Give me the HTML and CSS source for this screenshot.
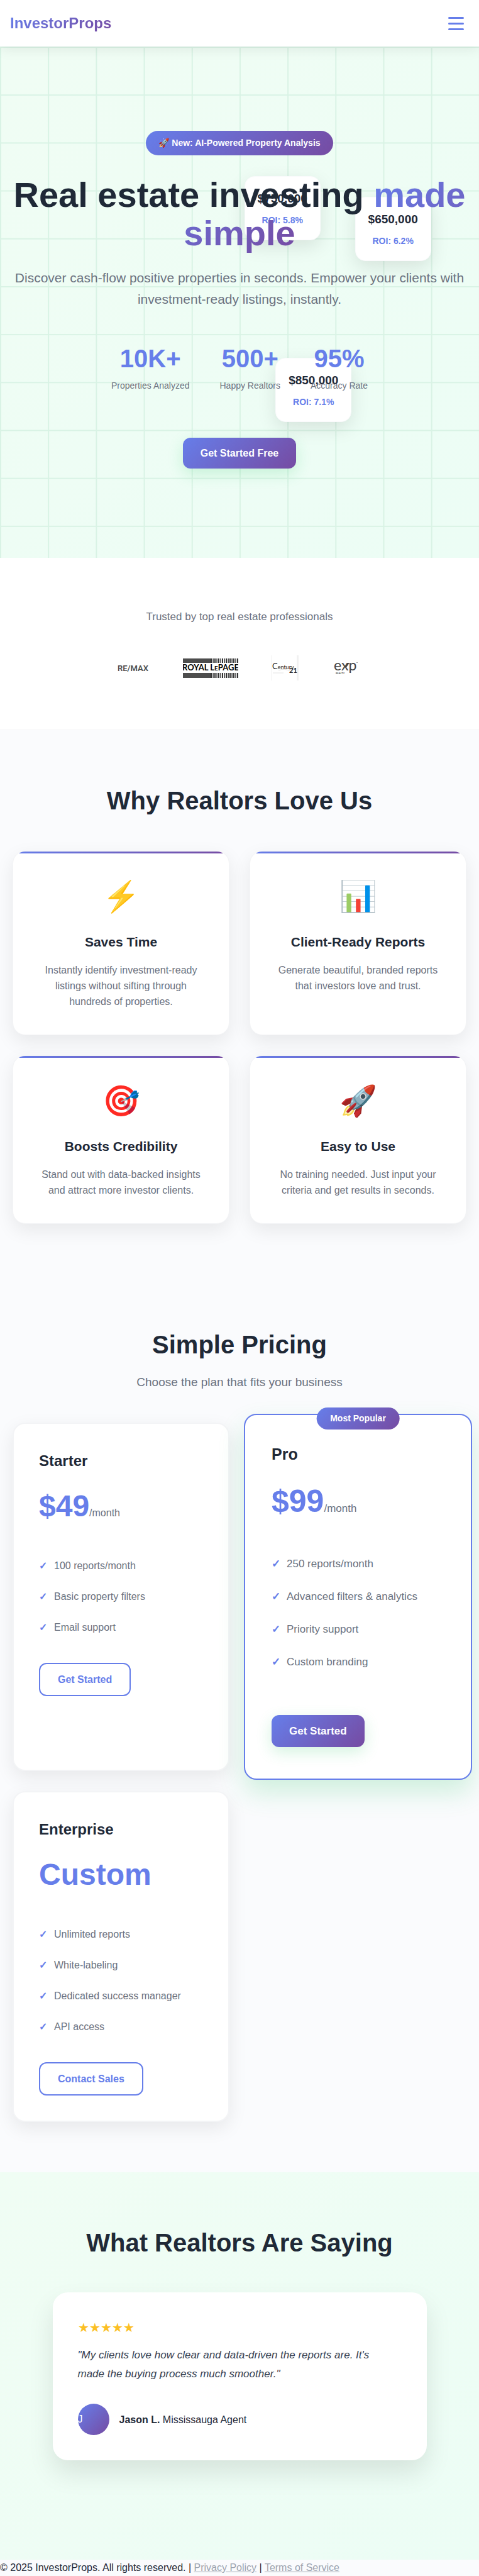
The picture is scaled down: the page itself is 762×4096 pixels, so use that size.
FILE: index.html
```html
<!DOCTYPE html>
<html lang="en">
<head>
<meta charset="utf-8">
<meta name="viewport" content="width=device-width, initial-scale=1">
<title>InvestorProps</title>
<link rel="stylesheet" href="styles.css">
</head>
<body>
<header class="nav">
  <a class="nav-logo gradient-text" href="#">InvestorProps</a>
  <button class="nav-toggle" type="button" aria-label="Open menu"><span></span><span></span><span></span></button>
</header>

<main>
<section class="hero">
  <div class="hero-cards" aria-hidden="true">
    <div class="float-card float-a"><p class="float-price">$750,000</p><p class="float-roi">ROI: 5.8%</p></div>
    <div class="float-card float-b"><p class="float-price">$650,000</p><p class="float-roi">ROI: 6.2%</p></div>
    <div class="float-card float-c"><p class="float-price">$850,000</p><p class="float-roi">ROI: 7.1%</p></div>
  </div>
  <div class="hero-content">
    <p class="badge">🚀 New: AI-Powered Property Analysis</p>
    <h1 class="hero-title">Real estate investing <span class="gradient-text">made simple</span></h1>
    <p class="hero-text">Discover cash-flow positive properties in seconds. Empower your clients with investment-ready listings, instantly.</p>
    <div class="stats">
      <div class="stat"><span class="stat-number">10K+</span><span class="stat-label">Properties Analyzed</span></div>
      <div class="stat"><span class="stat-number">500+</span><span class="stat-label">Happy Realtors</span></div>
      <div class="stat"><span class="stat-number">95%</span><span class="stat-label">Accuracy Rate</span></div>
    </div>
    <a class="btn btn-primary" href="#">Get Started Free</a>
  </div>
</section>

<section class="trust">
  <p class="trust-text">Trusted by top real estate professionals</p>
  <div class="logos">
    <svg width="52" height="40" viewBox="0 0 52 40" role="img" aria-label="RE/MAX">
      <text class="logo-remax" x="0" y="25">RE/MAX</text>
    </svg>
    <svg width="88" height="40" viewBox="0 0 88 40" role="img" aria-label="Royal LePage">
      <defs>
        <pattern id="bars" width="6" height="8" patternUnits="userSpaceOnUse">
          <rect width="1" height="8" fill="#555"/><rect x="2" width="2" height="8" fill="#333"/><rect x="5" width="1" height="8" fill="#777"/>
        </pattern>
      </defs>
      <rect y="5" width="44" height="7" fill="#4d4d4d"/><rect x="44" y="5" width="44" height="7" fill="url(#bars)"/>
      <text class="logo-royal" x="44" y="24" text-anchor="middle">ROYAL L<tspan class="logo-small">E</tspan>PAGE</text>
      <rect y="28" width="44" height="8" fill="#4d4d4d"/><rect x="44" y="28" width="44" height="8" fill="url(#bars)"/>
    </svg>
    <svg width="44" height="40" viewBox="0 0 44 40" role="img" aria-label="Century 21">
      <rect width="1" height="40" fill="#f3f3f3"/><rect x="41" width="3" height="40" fill="#f1f1f1"/>
      <path d="M3 28H20M12 24Q22 20 30 25" fill="none" stroke="#e3e3e3"/>
      <text class="logo-century" x="2" y="22"><tspan class="logo-cap">C</tspan>entury</text>
      <text class="logo-21" x="29" y="28">21</text>
    </svg>
    <svg width="49" height="40" viewBox="0 0 49 40" role="img" aria-label="eXp Realty">
      <text class="logo-exp" x="4" y="24">exp</text>
      <path d="M21 19 26 12H29L24 19Z" fill="#444"/>
      <text class="logo-realty" x="7" y="30">REALTY</text>
      <rect x="40" y="11" width="2" height="1" fill="#999"/>
    </svg>
  </div>
</section>

<section class="features">
  <h2 class="section-title">Why Realtors Love Us</h2>
  <div class="feature-grid">
    <article class="feature"><div class="feature-icon">⚡</div><h3>Saves Time</h3><p>Instantly identify investment-ready listings without sifting through hundreds of properties.</p></article>
    <article class="feature"><div class="feature-icon">📊</div><h3>Client-Ready Reports</h3><p>Generate beautiful, branded reports that investors love and trust.</p></article>
    <article class="feature"><div class="feature-icon">🎯</div><h3>Boosts Credibility</h3><p>Stand out with data-backed insights and attract more investor clients.</p></article>
    <article class="feature"><div class="feature-icon">🚀</div><h3>Easy to Use</h3><p>No training needed. Just input your criteria and get results in seconds.</p></article>
  </div>
</section>

<section class="pricing">
  <h2 class="section-title">Simple Pricing</h2>
  <p class="section-text">Choose the plan that fits your business</p>
  <div class="plan-grid">
    <article class="plan">
      <h3>Starter</h3>
      <p class="price">$49<span>/month</span></p>
      <ul><li>100 reports/month</li><li>Basic property filters</li><li>Email support</li></ul>
      <a class="btn btn-outline" href="#">Get Started</a>
    </article>
    <article class="plan plan-popular">
      <p class="plan-tag">Most Popular</p>
      <h3>Pro</h3>
      <p class="price">$99<span>/month</span></p>
      <ul><li>250 reports/month</li><li>Advanced filters &amp; analytics</li><li>Priority support</li><li>Custom branding</li></ul>
      <a class="btn btn-primary" href="#">Get Started</a>
    </article>
    <article class="plan">
      <h3>Enterprise</h3>
      <p class="price">Custom</p>
      <ul><li>Unlimited reports</li><li>White-labeling</li><li>Dedicated success manager</li><li>API access</li></ul>
      <a class="btn btn-outline" href="#">Contact Sales</a>
    </article>
  </div>
</section>

<section class="testimonials">
  <h2 class="section-title">What Realtors Are Saying</h2>
  <figure class="testimonial">
    <div class="stars" role="img" aria-label="5 out of 5 stars">★★★★★</div>
    <blockquote>"My clients love how clear and data-driven the reports are. It's made the buying process much smoother."</blockquote>
    <figcaption><span class="avatar">J</span><span><strong>Jason L.</strong> Mississauga Agent</span></figcaption>
  </figure>
</section>
</main>

<footer class="footer">© 2025 InvestorProps. All rights reserved. | <a href="#">Privacy Policy</a> | <a href="#">Terms of Service</a></footer>
</body>
</html>
```
FILE: styles.css
```css
:root {
  --ink: #1f2937;
  --muted: #6b7280;
  --accent: #667eea;
  --gradient: linear-gradient(135deg, #667eea 0%, #764ba2 100%);
  --mint: linear-gradient(135deg, #f0fdf4 0%, #ecfdf5 100%);
  --shadow: 0 10px 30px rgba(0, 0, 0, 0.08);
}

* { box-sizing: border-box; margin: 0; padding: 0; }

body {
  font: 16px/25px "Liberation Sans", Arial, sans-serif;
  color: var(--ink);
  background: #fafbfd;
}

.gradient-text {
  background: var(--gradient);
  -webkit-background-clip: text;
  background-clip: text;
  color: transparent;
}

/* Navigation */
.nav {
  position: relative;
  z-index: 2;
  display: flex;
  align-items: center;
  justify-content: space-between;
  height: 74px;
  padding: 0 16px;
  background: #fff;
  box-shadow: 0 4px 20px rgba(0, 0, 0, 0.08);
}
.nav-logo { font-size: 24px; line-height: 38px; font-weight: 700; text-decoration: none; }
.nav-toggle {
  display: flex;
  flex-direction: column;
  gap: 6px;
  padding: 8px;
  border: 0;
  background: none;
}
.nav-toggle span { width: 25px; height: 3px; border-radius: 2px; background: var(--accent); }

/* Hero */
.hero {
  position: relative;
  padding: 134px 16px 142px;
  text-align: center;
  background:
    linear-gradient(90deg, #d9f3e5 2px, transparent 2px) 0 0 / 10vw 10vw,
    linear-gradient(#d9f3e5 2px, transparent 2px) 0 0 / 10vw 10vw,
    var(--mint);
}
.hero-content { position: relative; display: flex; flex-direction: column; align-items: center; }
.badge {
  padding: 8px 20px;
  border-radius: 50px;
  background: var(--gradient);
  color: #fff;
  font-size: 14px;
  line-height: 23px;
  font-weight: 600;
  margin-bottom: 32px;
}
.hero-title { font-size: 56px; line-height: 61px; font-weight: 800; margin-bottom: 24px; }
.hero-text { font-size: 21px; line-height: 34px; color: var(--muted); margin-bottom: 45px; }
.stats { display: flex; gap: 48px; margin-bottom: 71px; }
.stat { display: flex; flex-direction: column; align-items: center; }
.stat-number { font-size: 40px; line-height: 64px; font-weight: 700; color: var(--accent); }
.stat-label { font-size: 14px; line-height: 23px; color: var(--muted); }

.float-card {
  position: absolute;
  padding: 20px;
  border: 1px solid #f9fafb;
  border-radius: 16px;
  background: #fff;
  box-shadow: 0 10px 30px rgba(0, 0, 0, 0.1);
}
.float-a { top: 206px; left: 51%; }
.float-b { top: 239px; right: 10%; }
.float-c { top: 495px; left: 57.5%; }
.float-price { font-size: 19px; line-height: 30px; font-weight: 700; margin-bottom: 8px; }
.float-roi { font-size: 14px; line-height: 22px; font-weight: 600; color: var(--accent); }

/* Buttons */
.btn {
  display: inline-block;
  padding: 12px 28px;
  border-radius: 12px;
  font-size: 16px;
  line-height: 25px;
  font-weight: 600;
  text-decoration: none;
}
.btn-primary { background: var(--gradient); color: #fff; box-shadow: 0 8px 24px rgba(34, 197, 94, 0.2); }
.btn-outline { border: 2px solid var(--accent); color: var(--accent); }

/* Trusted by */
.trust { padding: 80px 16px 78px; text-align: center; background: #fff; border-bottom: 1px solid #f3f4f6; }
.trust-text { font-size: 17px; line-height: 28px; color: var(--muted); margin-bottom: 47px; }
.logos { display: flex; justify-content: center; gap: 52px; }
.logo-remax { font: 600 13px Roboto, sans-serif; fill: #4d4d4d; }
.logo-royal { font: 700 13px Lato, sans-serif; fill: #000; }
.logo-small { font-size: 10px; }
.logo-century { font: 400 9px Lato, sans-serif; fill: #222; }
.logo-cap { font-size: 13px; }
.logo-21 { font: 700 11px Lato, sans-serif; fill: #222; }
.logo-exp { font: 400 23px Lato, sans-serif; fill: #444; }
.logo-realty { font: 600 4px Lato, sans-serif; fill: #444; }

/* Sections */
.section-title { font-size: 40px; line-height: 64px; font-weight: 700; text-align: center; }

.features { padding: 80px 20px; }
.features .section-title { margin-bottom: 48px; }
.feature-grid { display: grid; grid-template-columns: 1fr 1fr; gap: 32px; }
.feature {
  position: relative;
  overflow: hidden;
  padding: 40px;
  text-align: center;
  border: 1px solid #f3f4f6;
  border-radius: 20px;
  background: #fff;
  box-shadow: var(--shadow);
}
.feature::before { content: ""; position: absolute; top: 0; left: 0; right: 0; height: 3px; background: var(--gradient); }
.feature-icon { font-size: 48px; line-height: 63px; margin-bottom: 24px; }
.feature h3 { font-size: 21px; line-height: 33px; margin-bottom: 16px; }
.feature p { color: var(--muted); }

/* Pricing */
.pricing { padding: 80px 20px; }
.pricing .section-title { margin-bottom: 13px; }
.section-text { font-size: 19px; line-height: 30px; color: var(--muted); text-align: center; margin-bottom: 49px; }
.plan-grid { display: grid; grid-template-columns: 1fr 1fr; gap: 32px; }
.plan {
  position: relative;
  padding: 40px;
  border: 2px solid #f3f4f6;
  border-radius: 20px;
  background: #fff;
  box-shadow: var(--shadow);
}
.plan h3 { font-size: 24px; line-height: 38px; margin-bottom: 15px; }
.price { font-size: 48px; line-height: 76px; font-weight: 800; color: var(--accent); margin-bottom: 32px; }
.price span { font-size: 16px; line-height: 25px; font-weight: 400; color: var(--muted); }
.plan ul { list-style: none; margin-bottom: 32px; }
.plan li { display: flex; padding: 12px 0; color: var(--muted); }
.plan li::before { content: "✓"; width: 24px; font-weight: 700; color: var(--accent); }
.plan-popular {
  margin: -14px -9px;
  padding: 42px 42px 50px;
  border-color: var(--accent);
  box-shadow: 0 20px 42px rgba(34, 197, 94, 0.2);
}
.plan-tag {
  position: absolute;
  top: -12px;
  left: 50%;
  transform: translateX(-50%);
  padding: 6px 22px;
  border-radius: 50px;
  background: var(--gradient);
  color: #fff;
  font-size: 14px;
  line-height: 23px;
  font-weight: 600;
  white-space: nowrap;
}
.plan-popular h3 { font-size: 25px; line-height: 40px; }
.plan-popular .price { font-size: 50px; line-height: 80px; margin-bottom: 34px; }
.plan-popular .price span, .plan-popular li, .plan-popular .btn { font-size: 17px; }
.plan-popular .price span { line-height: 27px; }
.plan-popular ul { margin-bottom: 58px; }
.plan-popular li { line-height: 28px; }
.plan-popular .btn { line-height: 27px; }

/* Testimonials */
.testimonials { padding: 80px 20px 158px; background: var(--mint); }
.testimonials .section-title { margin-bottom: 47px; }
.testimonial {
  max-width: 595px;
  margin: 0 auto;
  padding: 40px;
  border-radius: 24px;
  background: #fff;
  box-shadow: 0 20px 40px rgba(0, 0, 0, 0.1);
}
.stars { font-size: 20px; line-height: 32px; color: #fbbf24; margin-bottom: 13px; }
.testimonial blockquote {
  max-width: 500px;
  font-size: 17px;
  line-height: 30px;
  font-style: italic;
  color: #374151;
  margin-bottom: 32px;
}
.testimonial figcaption { display: flex; align-items: center; gap: 16px; }
.avatar { width: 50px; height: 50px; line-height: 50px; border-radius: 50%; background: var(--gradient); color: #fff; }

.footer { line-height: 26px; }
.footer a { color: #9ca3af; }
```
